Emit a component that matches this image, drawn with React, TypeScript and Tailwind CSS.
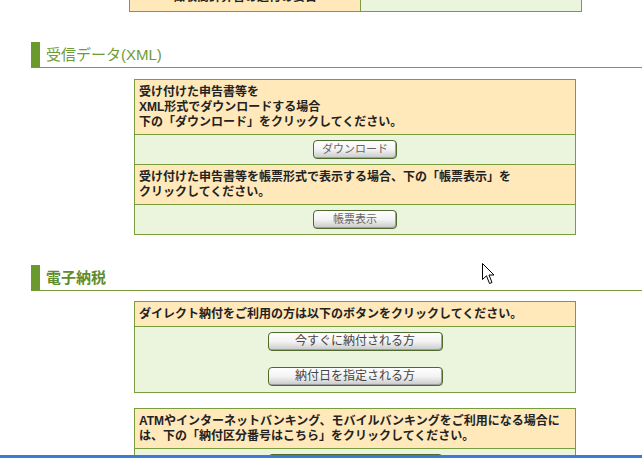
const Btn = ({ label, w, small }: { label: string; w: string; small?: boolean }) => (
  <button
    className={`${w} h-[19px] rounded-[4px] border border-[#4f6a2c] bg-linear-to-b from-white via-[#f3f3f3] to-[#c9c9c9] shadow-[inset_-1px_-1px_0_#a0a0a0] leading-[17px] ${
      small ? "text-[11px] text-[#666]" : "text-[12px] text-[#444]"
    }`}
  >
    {label}
  </button>
);

const Heading = ({ title, bold }: { title: string; bold?: boolean }) => (
  <div className="ml-[31px] flex h-[26px] items-center border-b border-l-[9px] border-[#7b9c3c] border-l-[#6a9a2e] pl-[6px]">
    <span className={`text-[15px] leading-[18px] ${bold ? "font-bold text-[#5f8c2c]" : "text-[#6f9b36]"}`}>{title}</span>
  </div>
);

const TextRow = ({ children, top, pb = "pb-[4px]" }: { children: React.ReactNode; top?: boolean; pb?: string }) => (
  <div className={`bg-[#ffe8ba] px-[4px] pt-[5px] ${pb} text-[12px] leading-[15px] font-bold text-[#222] ${top ? "border-t border-[#7b9c3c]" : ""}`}>
    {children}
  </div>
);

const BtnRow = ({ children }: { children: React.ReactNode }) => (
  <div className="flex h-[30px] items-center justify-center border-t border-[#7b9c3c] bg-[#ebf5de]">{children}</div>
);

export default function App() {
  return (
    <div className="relative h-[458px] w-[642px] overflow-hidden bg-white font-['Liberation_Sans','Noto_Sans_CJK_JP',sans-serif]">
      <div className="ml-[129px] mt-[-19px] flex h-[31px] w-[453px] border border-[#7b9c3c]">
        <div className="flex w-[231px] items-center justify-center border-r border-[#7b9c3c] bg-[#ffe8ba] text-[12px] font-bold text-[#222]">
          徴収高計算書の送付の要否
        </div>
        <div className="flex-1 bg-[#ebf5de]" />
      </div>

      <div className="mt-[30px]">
        <Heading title="受信データ(XML)" />
      </div>

      <div className="ml-[134px] mt-[11px] w-[442px] border border-[#7b9c3c]">
        <TextRow pb="pb-[4px]">
          受け付けた申告書等を
          <br />
          XML形式でダウンロードする場合
          <br />
          下の「ダウンロード」をクリックしてください。
        </TextRow>
        <BtnRow>
          <Btn label="ダウンロード" w="w-[84px]" small />
        </BtnRow>
        <TextRow top>
          受け付けた申告書等を帳票形式で表示する場合、下の「帳票表示」を
          <br />
          クリックしてください。
        </TextRow>
        <BtnRow>
          <Btn label="帳票表示" w="w-[84px]" small />
        </BtnRow>
      </div>

      <div className="mt-[30px]">
        <Heading title="電子納税" bold />
      </div>

      <div className="ml-[134px] mt-[10px] w-[442px] border border-[#7b9c3c]">
        <TextRow>ダイレクト納付をご利用の方は以下のボタンをクリックしてください。</TextRow>
        <div className="flex flex-col items-center gap-[16px] border-t border-[#7b9c3c] bg-[#ebf5de] pb-[6px] pt-[5px]">
          <Btn label="今すぐに納付される方" w="w-[175px]" />
          <Btn label="納付日を指定される方" w="w-[175px]" />
        </div>
      </div>

      <div className="ml-[134px] mt-[15px] w-[442px] border border-[#7b9c3c]">
        <TextRow>
          ATMやインターネットバンキング、モバイルバンキングをご利用になる場合に
          <br />
          は、下の「納付区分番号はこちら」をクリックしてください。
        </TextRow>
        <div className="flex flex-col items-center border-t border-[#7b9c3c] bg-[#ebf5de] pt-[5px] pb-[6px]">
          <Btn label="納付区分番号はこちら" w="w-[175px]" />
        </div>
      </div>

      <svg className="absolute left-[482px] top-[263px]" width="13" height="22" viewBox="0 0 13 22">
        <path d="M0.5 0.5 L0.5 16.5 L4.5 12.8 L7.5 20.5 L10 19.5 L7 12 L12 12 Z" fill="white" stroke="black" strokeWidth="1" />
      </svg>

      <div className="absolute bottom-0 left-0 right-0 h-[3px] bg-[#3a7bd5]" />
    </div>
  );
}
